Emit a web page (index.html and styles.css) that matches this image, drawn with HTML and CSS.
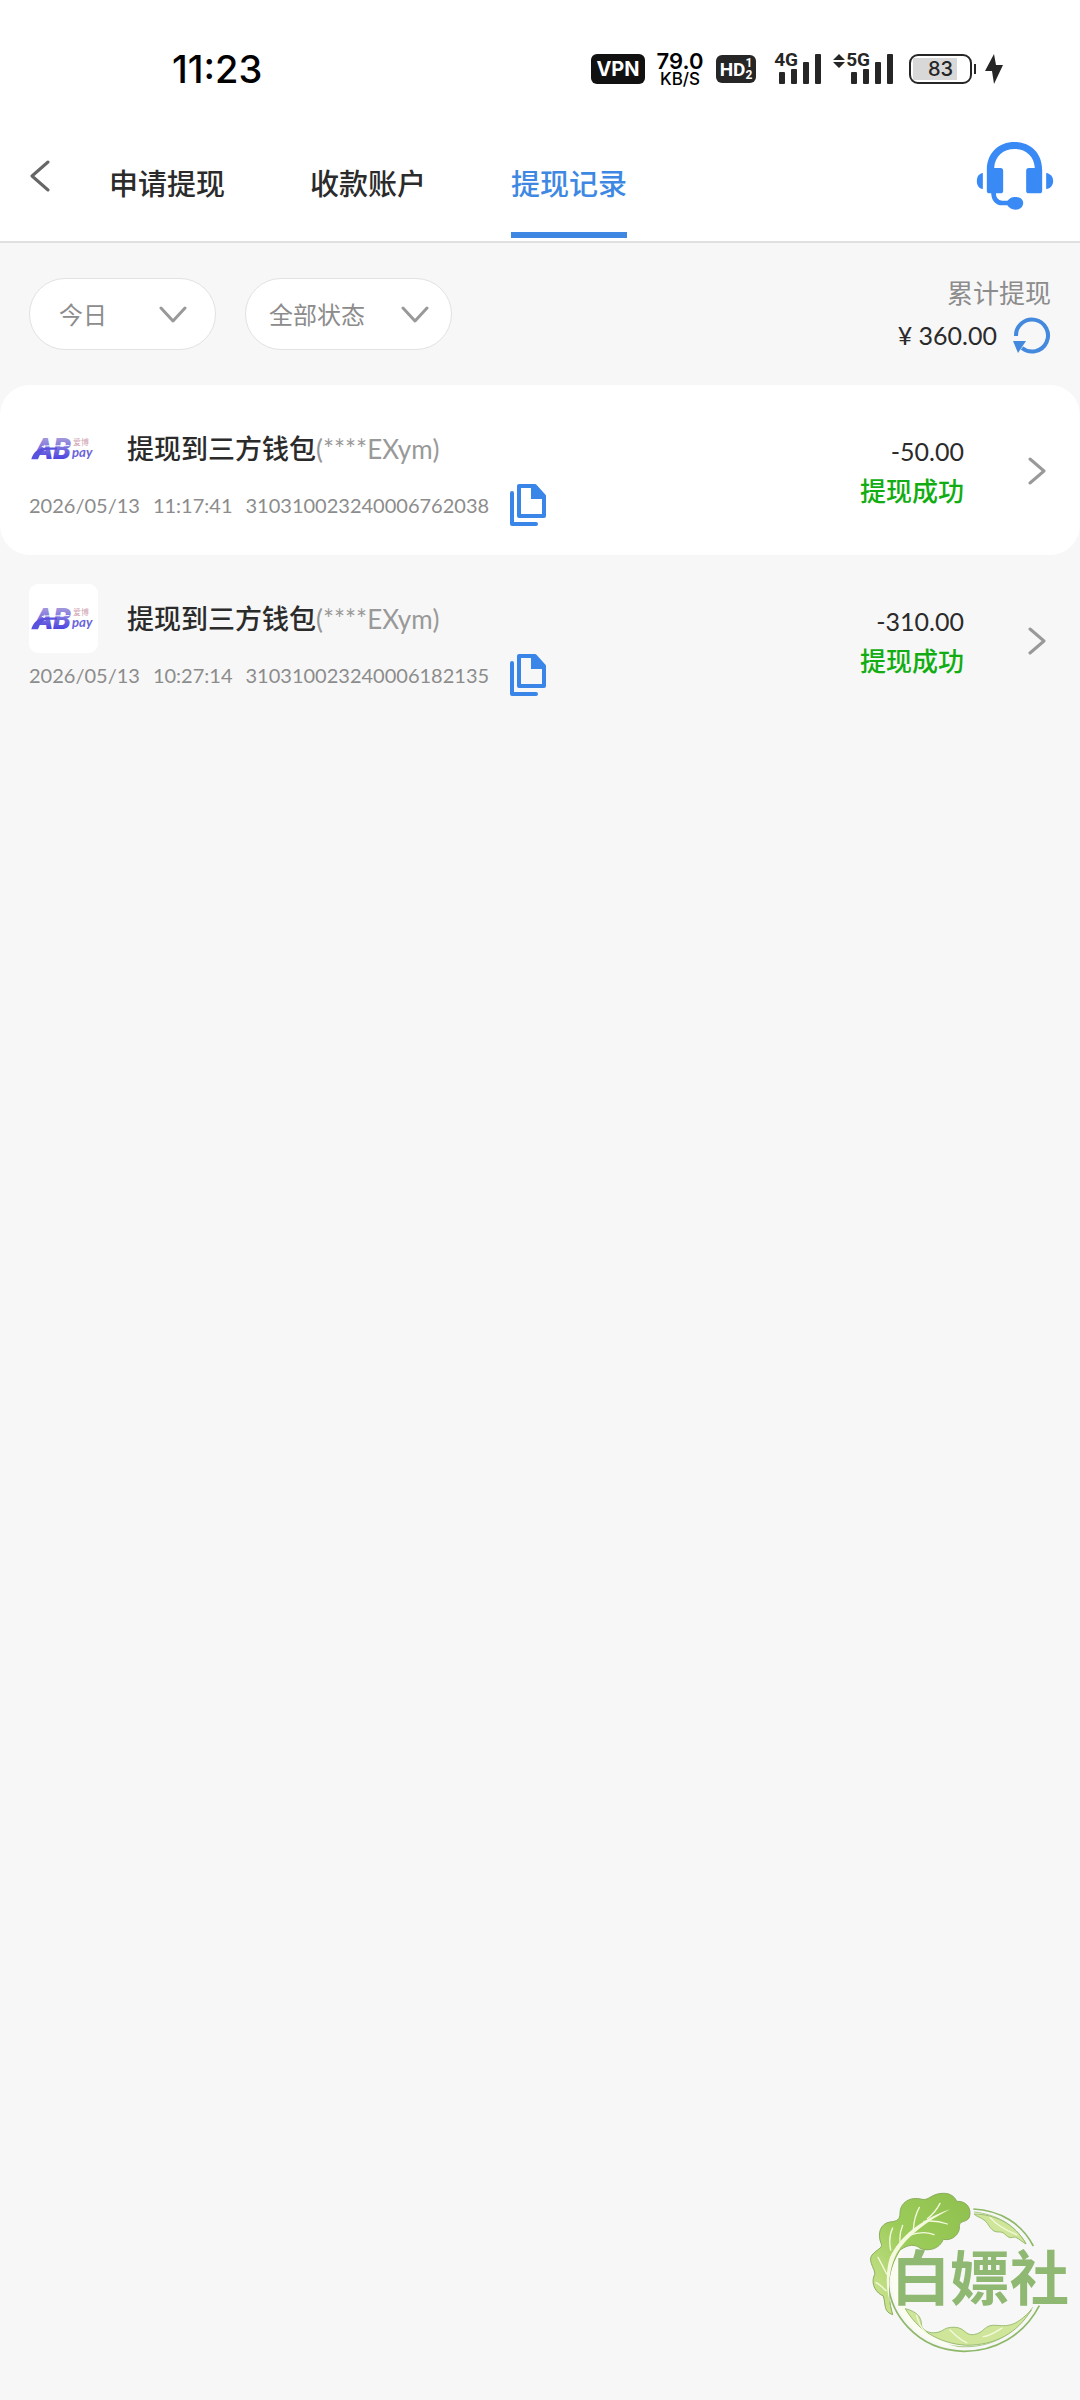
FILE: index.html
```html
<!DOCTYPE html>
<html lang="zh-CN">
<head>
  <meta charset="UTF-8">
  <meta name="viewport" content="width=device-width, initial-scale=1.0">
  <title>提现记录</title>
  <link rel="stylesheet" href="styles.css">
</head>
<body>

  <!-- 公用图形 -->
  <svg class="defs" width="0" height="0" aria-hidden="true">
    <defs>
      <linearGradient id="ab-fill" x1="0" y1="0" x2="0" y2="1">
        <stop offset="0.2" stop-color="#a095dc"/>
        <stop offset="0.8" stop-color="#4a43e0"/>
      </linearGradient>
    </defs>
    <symbol id="copy" viewBox="0 0 36 42">
      <path d="M2 9V40H26" fill="none" stroke="#3a86e8" stroke-width="4" stroke-linecap="round" stroke-linejoin="round"/>
      <path d="M9 2H25L34 12V32H9Z" fill="none" stroke="#3a86e8" stroke-width="4" stroke-linejoin="round"/>
      <path d="M21 2H26L35 12V15H21Z" fill="#3a86e8"/>
    </symbol>
    <symbol id="down" viewBox="0 0 28 18">
      <path d="M2 2L14 15L26 2" fill="none" stroke="#999" stroke-width="3" stroke-linecap="round" stroke-linejoin="round"/>
    </symbol>
    <symbol id="next" viewBox="0 0 18 28">
      <path d="M2 2L16 14L2 26" fill="none" stroke="#999" stroke-width="3" stroke-linecap="round" stroke-linejoin="round"/>
    </symbol>
    <symbol id="signal" viewBox="0 0 42 30">
      <path d="M1 18H5Q6 18 6 19V29Q6 30 5 30H1Q0 30 0 29V19Q0 18 1 18ZM13 15H17Q18 15 18 16V29Q18 30 17 30H13Q12 30 12 29V16Q12 15 13 15ZM25 8H29Q30 8 30 9V29Q30 30 29 30H25Q24 30 24 29V9Q24 8 25 8ZM37 0H41Q42 0 42 1V29Q42 30 41 30H37Q36 30 36 29V1Q36 0 37 0Z" fill="#262626"/>
    </symbol>
  </svg>

  <!-- 状态栏 -->
  <div class="status-bar">
    <time class="clock">11:23</time>
    <div class="status-icons">
      <span class="badge vpn">VPN</span>
      <span class="speed"><b>79.0</b><small>KB/S</small></span>
      <span class="badge hd">HD<span class="sims"><i>1</i><i>2</i></span></span>
      <span class="net net-4g">
        <svg width="42" height="30"><use href="#signal"/></svg>
        <span class="net-name">4G</span>
      </span>
      <span class="net net-5g">
        <svg width="12" height="30" viewBox="0 0 12 30"><path d="M6 0L12 6H0ZM6 14L12 8H0Z" fill="#262626"/></svg>
        <svg width="42" height="30"><use href="#signal"/></svg>
        <span class="net-name">5G</span>
      </span>
      <span class="battery">83</span>
      <svg class="bolt" width="20" height="32" viewBox="0 0 20 32"><path d="M10 1L1 18H8L10 31L19 12H12Z" fill="#262626"/></svg>
    </div>
  </div>

  <!-- 顶部导航 -->
  <header class="header">
    <button class="icon-btn back" aria-label="返回">
      <svg width="20" height="32" viewBox="0 0 20 32"><path d="M18 2L2 16L18 30" fill="none" stroke="#666" stroke-width="3" stroke-linecap="round" stroke-linejoin="round"/></svg>
    </button>
    <nav class="tabs">
      <a class="tab" href="#">申请提现</a>
      <a class="tab" href="#">收款账户</a>
      <a class="tab active" href="#">提现记录</a>
    </nav>
    <button class="icon-btn service" aria-label="客服">
      <svg width="78" height="68" viewBox="78 66 233 204" fill="#3a8af5">
        <path d="M110 150C110 98 146 66 193 66S276 98 276 150V212Q276 220 268 220H236Q228 220 228 212V152Q228 144 236 144H254C252 108 226 87 193 87S134 108 132 144H151Q159 144 159 152V212Q159 220 151 220H118Q110 220 110 212Z"/>
        <path d="M98 159V207C86 206 80 196 80 183S86 161 98 159ZM288 159V207C301 206 309 196 309 183S301 161 288 159Z"/>
        <path d="M130 216C130 238 140 249 156 249H176" fill="none" stroke="#3a8af5" stroke-width="14"/>
        <path d="M168 249C176 234 184 231 196 231C211 231 219 239 219 249S211 269 196 269C184 269 176 264 168 249Z"/>
      </svg>
    </button>
  </header>

  <!-- 筛选 -->
  <section class="filters">
    <label class="pill pill-date">
      <select aria-label="日期"><option>今日</option></select>
      <svg width="28" height="18"><use href="#down"/></svg>
    </label>
    <label class="pill pill-state">
      <select aria-label="状态"><option>全部状态</option></select>
      <svg width="28" height="18"><use href="#down"/></svg>
    </label>
    <div class="total">
      <div class="total-label">累计提现</div>
      <div class="total-row">
        <span>¥ 360.00</span>
        <button class="icon-btn" aria-label="刷新">
          <svg width="38" height="38" viewBox="0 0 38 38">
            <path d="M3 20A16 16 0 1 1 9 32" fill="none" stroke="#4389dd" stroke-width="4"/>
            <path d="M0 25H13L5 37Z" fill="#4389dd"/>
          </svg>
        </button>
      </div>
    </div>
  </section>

  <!-- 提现记录列表 -->
  <main class="list">
    <article class="record card">
      <div class="info">
        <div class="name-row">
          <svg class="logo" viewBox="27 42 210 210">
            <text class="ab-mark" x="42" y="180" fill="url(#ab-fill)">AB</text>
            <path d="M34 180C40 158 55 146 78 144H112V151H84C66 153 58 165 54 180Z" fill="#5a52dc"/>
            <path d="M66 141C84 137 110 140 150 138" stroke="#fff" stroke-width="3" fill="none"/>
            <text class="ab-cn" x="161" y="137">爱博</text>
            <text class="ab-pay" x="158" y="174">pay</text>
          </svg>
          <h2>提现到三方钱包<span>(****EXym)</span></h2>
        </div>
        <div class="meta">
          <span>2026/05/13</span><span>11:17:41</span><span>310310023240006762038</span>
          <button class="icon-btn copy" aria-label="复制"><svg width="36" height="42"><use href="#copy"/></svg></button>
        </div>
      </div>
      <div class="amount">
        <div>-50.00</div>
        <div class="ok">提现成功</div>
      </div>
      <svg width="18" height="28"><use href="#next"/></svg>
    </article>

    <article class="record">
      <div class="info">
        <div class="name-row">
          <svg class="logo" viewBox="27 42 210 210">
            <text class="ab-mark" x="42" y="180" fill="url(#ab-fill)">AB</text>
            <path d="M34 180C40 158 55 146 78 144H112V151H84C66 153 58 165 54 180Z" fill="#5a52dc"/>
            <path d="M66 141C84 137 110 140 150 138" stroke="#fff" stroke-width="3" fill="none"/>
            <text class="ab-cn" x="161" y="137">爱博</text>
            <text class="ab-pay" x="158" y="174">pay</text>
          </svg>
          <h2>提现到三方钱包<span>(****EXym)</span></h2>
        </div>
        <div class="meta">
          <span>2026/05/13</span><span>10:27:14</span><span>310310023240006182135</span>
          <button class="icon-btn copy" aria-label="复制"><svg width="36" height="42"><use href="#copy"/></svg></button>
        </div>
      </div>
      <div class="amount">
        <div>-310.00</div>
        <div class="ok">提现成功</div>
      </div>
      <svg width="18" height="28"><use href="#next"/></svg>
    </article>
  </main>

  <!-- 右下角水印 -->
  <svg class="watermark" width="230" height="200" viewBox="0 0 690 600">
    <defs>
      <linearGradient id="leaf" x1="1" y1="0" x2="0" y2="1">
        <stop offset="0" stop-color="#8fc04f"/>
        <stop offset=".5" stop-color="#9bcb58"/>
        <stop offset="1" stop-color="#d3e89a"/>
      </linearGradient>
    </defs>
    <path d="M370 117C450 121 515 160 550 228M568 407C520 500 430 545 340 544C200 540 112 430 114 318C116 280 124 255 138 232" fill="none" stroke="#8db868" stroke-width="5"/>
    <path d="M372 126C440 134 490 160 528 220M548 412C490 500 420 534 330 530C200 520 135 420 130 320" fill="none" stroke="#a9cb82" stroke-width="3"/>
    <path d="M150 232C116 290 110 360 160 440C205 500 270 532 350 538C280 524 210 485 175 425C135 350 140 285 158 240Z" fill="#fbfdf0"/>
    <path d="M372 132C430 132 495 160 528 222C510 212 500 198 488 202C470 208 466 184 448 186C420 188 418 160 402 150C392 142 380 140 372 132Z" fill="#cfe69a" stroke="#9bbd72" stroke-width="3"/>
    <path d="M166 416C200 425 215 440 214 465C220 485 240 490 258 488C285 484 280 470 316 472C345 474 345 496 370 494C405 490 400 462 440 466C480 470 500 465 544 420C500 490 440 524 350 526C260 520 200 475 166 416Z" fill="#cfe69a" stroke="#9bbd72" stroke-width="3"/>
    <path d="M128 434C100 425 108 405 100 378C80 370 62 345 72 318C84 306 50 275 66 255C80 238 98 235 94 222C80 190 92 160 120 156C142 154 150 148 150 130C150 98 180 78 216 88C238 92 242 72 276 70C304 68 316 84 320 94C350 92 366 116 358 142C350 158 332 150 328 166C332 190 308 214 280 208C268 238 236 244 212 236C196 222 176 222 150 240C112 300 108 360 128 434Z" fill="url(#leaf)" stroke="#8aad5c" stroke-width="3"/>
    <path d="M120 262C150 200 210 150 300 118C230 154 170 200 140 250C120 290 112 340 120 400C106 350 108 300 120 262Z" fill="#f5fadf"/>
    <path d="M190 178C192 150 198 130 208 112M232 146C250 132 262 116 270 100M222 154C258 150 276 156 292 162M178 196C210 184 232 186 252 194M122 240C116 210 120 190 128 174M150 215C148 190 152 180 158 166M110 312C98 288 92 276 84 262M108 362C96 350 88 342 78 338M200 436C205 460 215 475 228 488M300 480C320 500 335 512 350 518M400 500C420 498 440 484 456 474M420 142C440 165 465 180 500 194" fill="none" stroke="#f3f9dc" stroke-width="4" stroke-linecap="round"/>
    <text x="390" y="390" text-anchor="middle">白嫖社</text>
  </svg>

</body>
</html>
```
FILE: styles.css
```css
* {
  box-sizing: border-box;
}

body {
  margin: 0;
  min-height: 100vh;
  position: relative;
  background-color: #f7f7f7;
  color: #2b2b2b;
  font-family: Lato, "Noto Sans CJK SC", sans-serif;
}

svg {
  display: block;
  flex: none;
}

.defs {
  position: absolute;
}

.icon-btn {
  padding: 0;
  border: 0;
  background: none;
  cursor: pointer;
}

/* 状态栏 */
.status-bar {
  display: flex;
  justify-content: space-between;
  align-items: center;
  height: 120px;
  padding: 18px 76px 0 172px;
  background-color: #fff;
  color: #000;
  font-family: Inter, sans-serif;
}

.clock {
  font-size: 38px;
  font-weight: 500;
}

.status-icons {
  display: flex;
  align-items: center;
}

.badge {
  display: flex;
  align-items: center;
  justify-content: center;
  border-radius: 6px;
  background-color: #111;
  color: #fff;
  font-weight: 700;
}

.vpn {
  width: 54px;
  height: 30px;
  font-size: 20px;
}

.speed {
  display: flex;
  flex-direction: column;
  align-items: center;
  width: 48px;
  margin: 0 12px 0 11px;
}

.speed b {
  font-size: 22px;
  font-weight: 600;
  line-height: 20px;
}

.speed small {
  font-size: 17px;
  font-weight: 500;
  line-height: 17px;
}

.hd {
  width: 40px;
  height: 28px;
  background-color: #262626;
  font-family: Roboto, sans-serif;
  font-size: 19px;
}

.sims {
  display: flex;
  flex-direction: column;
  font-size: 12px;
  line-height: 12px;
}

.sims i {
  font-style: normal;
}

.net {
  position: relative;
  display: flex;
  color: #262626;
}

.net-4g {
  margin-left: 23px;
}

.net-5g {
  gap: 6px;
  margin-left: 12px;
}

/* 制式文字叠在信号格左上方 */
.net-name {
  position: absolute;
  top: -2px;
  right: 23px;
  font-family: Roboto, sans-serif;
  font-size: 19px;
  font-weight: 700;
  line-height: 16px;
}

.battery {
  position: relative;
  width: 63px;
  height: 30px;
  margin: 0 12px 0 16px;
  border: 2px solid #262626;
  border-radius: 9px;
  background: linear-gradient(to right, #d8d8d8 44px, #fff 44px) 2px 2px / 55px 22px no-repeat;
  color: #262626;
  font-size: 20px;
  font-weight: 500;
  line-height: 26px;
  text-align: center;
}

.battery::after {
  content: "";
  position: absolute;
  top: 8px;
  right: -6px;
  width: 2px;
  height: 10px;
  background-color: #262626;
}

/* 顶部导航 */
.header {
  display: flex;
  padding: 0 26px 0 30px;
  border-bottom: 2px solid #e0e0e0;
  background-color: #fff;
}

.header .icon-btn {
  padding-bottom: 10px;
}

.tabs {
  display: flex;
  flex: 1;
  gap: 85px;
  margin-left: 59px;
}

.tab {
  margin-bottom: 3px;
  padding: 44px 0 28px;
  border-bottom: 6px solid transparent;
  color: #2b2b2b;
  font-size: 29px;
  font-weight: 500;
  line-height: 40px;
  text-decoration: none;
}

.tab.active {
  border-color: #3e88e4;
  color: #3e88e4;
}

/* 筛选 */
.filters {
  display: flex;
  align-items: flex-start;
  gap: 29px;
  padding: 35px 29px 31px;
}

.pill {
  position: relative;
}

.pill select {
  appearance: none;
  width: 100%;
  height: 72px;
  padding: 0 29px;
  border: 1px solid #e2e2e2;
  border-radius: 36px;
  background-color: #fff;
  color: #8c8c8c;
  font-family: inherit;
  font-size: 24px;
}

.pill svg {
  position: absolute;
  top: 28px;
  right: 29px;
  pointer-events: none;
}

.pill-date {
  width: 187px;
}

.pill-state {
  width: 207px;
}

.pill-state select {
  padding: 0 23px;
}

.pill-state svg {
  right: 23px;
}

.total {
  display: flex;
  flex-direction: column;
  align-items: flex-end;
  gap: 8px;
  margin-left: auto;
}

.total-label {
  color: #8c8c8c;
  font-size: 26px;
  line-height: 30px;
}

.total-row {
  display: flex;
  align-items: center;
  gap: 16px;
  font-size: 25px;
}

/* 记录列表 */
.record {
  display: flex;
  align-items: center;
  padding: 29px 34px 28px 29px;
}

.card {
  border-radius: 30px;
  background-color: #fff;
}

.info {
  flex: 1;
}

.name-row {
  display: flex;
  align-items: center;
  gap: 29px;
}

.logo {
  width: 69px;
  height: 69px;
  border-radius: 9px;
  background-color: #fff;
}

.name-row h2 {
  margin: 0;
  font-size: 27px;
  font-weight: 500;
  line-height: 40px;
}

.name-row h2 span {
  color: #999;
  font-size: 26px;
  font-weight: 400;
}

.meta {
  display: flex;
  align-items: center;
  gap: 13px;
  height: 44px;
  color: #8c8c8c;
  font-size: 20px;
}

.copy {
  margin-left: 8px;
}

.amount {
  margin-right: 64px;
  font-size: 25px;
  line-height: 40px;
  text-align: right;
}

.ok {
  color: #12ad12;
  font-size: 26px;
  font-weight: 500;
}

.ab-mark {
  font: italic 900 88px Roboto, sans-serif;
}

.ab-cn {
  fill: #cf9fb0;
  font-size: 24px;
}

.ab-pay {
  fill: #6a63dc;
  font: italic 700 40px Lato, sans-serif;
}

/* 水印 */
.watermark {
  position: absolute;
  right: 0;
  bottom: 30px;
}

.watermark text {
  fill: #8fb872;
  font-size: 178px;
  font-weight: 700;
}
```
